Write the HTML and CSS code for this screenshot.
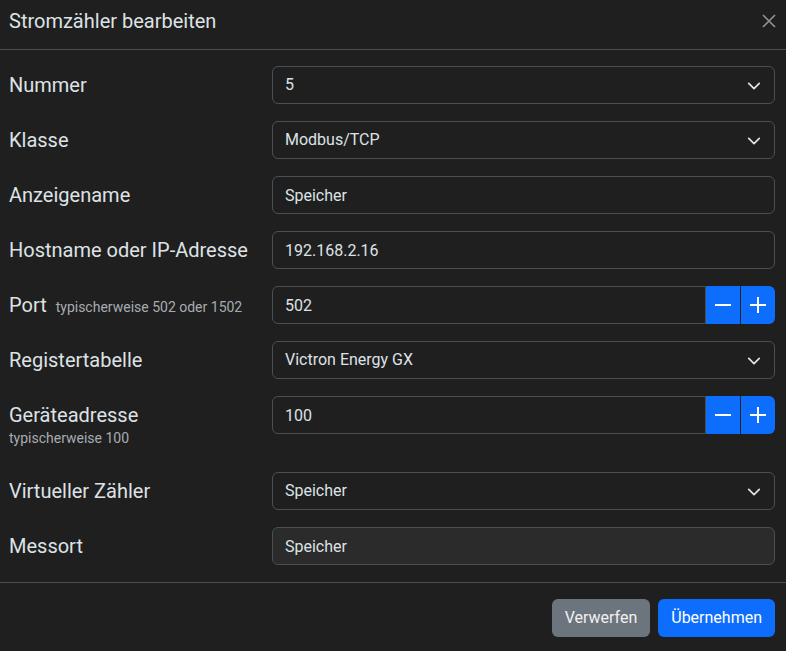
FILE: index.html
```html
<!DOCTYPE html>
<html lang="de">
  <head>
    <meta charset="UTF-8" />
    <meta name="viewport" content="width=device-width, initial-scale=1.0" />
    <title>Stromzähler bearbeiten</title>
    <link rel="stylesheet" href="styles.css">
  </head>
  <body>
    <div class="modal">
      <div class="modal-header">
        <h5 class="modal-title">Stromzähler bearbeiten</h5>
        <button class="btn-close" aria-label="Schließen">
          <svg width="14" height="14" viewBox="0 0 14 14"><path d="M1 1L13 13M13 1L1 13" stroke="currentColor" stroke-width="1.6" /></svg>
        </button>
      </div>

      <form class="modal-body">
        <div class="form-row">
          <label class="form-label">Nummer</label>
          <div class="field select-wrap">
            <select class="form-control"><option>5</option></select>
            <svg class="chevron" viewBox="0 0 16 16"><path d="m2 5 6 6 6-6" /></svg>
          </div>
        </div>

        <div class="form-row">
          <label class="form-label">Klasse</label>
          <div class="field select-wrap">
            <select class="form-control"><option>Modbus/TCP</option></select>
            <svg class="chevron" viewBox="0 0 16 16"><path d="m2 5 6 6 6-6" /></svg>
          </div>
        </div>

        <div class="form-row">
          <label class="form-label">Anzeigename</label>
          <div class="field">
            <input class="form-control" value="Speicher" />
          </div>
        </div>

        <div class="form-row">
          <label class="form-label">Hostname oder IP-Adresse</label>
          <div class="field">
            <input class="form-control" value="192.168.2.16" />
          </div>
        </div>

        <div class="form-row">
          <label class="form-label">Port <small class="help-inline">typischerweise 502 oder 1502</small></label>
          <div class="field input-group">
            <input class="form-control" value="502" />
            <button type="button" class="btn-step"><svg viewBox="0 0 16 16"><path d="M0 8H16" /></svg></button>
            <button type="button" class="btn-step last"><svg viewBox="0 0 16 16"><path d="M0 8H16M8 0V16" /></svg></button>
          </div>
        </div>

        <div class="form-row">
          <label class="form-label">Registertabelle</label>
          <div class="field select-wrap">
            <select class="form-control"><option>Victron Energy GX</option></select>
            <svg class="chevron" viewBox="0 0 16 16"><path d="m2 5 6 6 6-6" /></svg>
          </div>
        </div>

        <div class="form-row">
          <label class="form-label with-help">Geräteadresse
            <small class="help-block">typischerweise 100</small>
          </label>
          <div class="field input-group">
            <input class="form-control" value="100" />
            <button type="button" class="btn-step"><svg viewBox="0 0 16 16"><path d="M0 8H16" /></svg></button>
            <button type="button" class="btn-step last"><svg viewBox="0 0 16 16"><path d="M0 8H16M8 0V16" /></svg></button>
          </div>
        </div>

        <div class="form-row">
          <label class="form-label">Virtueller Zähler</label>
          <div class="field select-wrap">
            <select class="form-control"><option>Speicher</option></select>
            <svg class="chevron" viewBox="0 0 16 16"><path d="m2 5 6 6 6-6" /></svg>
          </div>
        </div>

        <div class="form-row">
          <label class="form-label">Messort</label>
          <div class="field">
            <input class="form-control" value="Speicher" disabled />
          </div>
        </div>
      </form>

      <div class="modal-footer">
        <button type="button" class="btn btn-secondary">Verwerfen</button>
        <button type="button" class="btn btn-primary">Übernehmen</button>
      </div>
    </div>
  </body>
</html>
```

FILE: styles.css
```css
body {
  margin: 0;
  background: #1f1f1f;
  color: #dee2e6;
  font-family: Roboto, "Liberation Sans", sans-serif;
}
.modal {
  display: flex;
  flex-direction: column;
  height: 651px;
  overflow: hidden;
}
.modal-header {
  display: flex;
  align-items: flex-start;
  justify-content: space-between;
  padding: 6px 10px 13px 9px;
  border-bottom: 1px solid #4b4f53;
}
.modal-title {
  margin: 0;
  font-size: 20px;
  font-weight: 400;
  line-height: 30px;
}
.btn-close {
  background: none;
  border: 0;
  padding: 0;
  margin-top: 8px;
  color: #939393;
  cursor: pointer;
}
.btn-close svg {
  display: block;
}
.modal-body {
  padding: 16px 11px 0 9px;
}
.form-row {
  display: grid;
  grid-template-columns: 239px 1fr;
  column-gap: 24px;
  margin-bottom: 17px;
}
.form-label {
  padding: 4px 0;
  font-size: 20px;
  line-height: 30px;
}
.form-label.with-help {
  padding-bottom: 6px;
}
.help-inline {
  margin-left: 4px;
  font-size: 14px;
  line-height: 1;
  color: #a7acb1;
}
.help-block {
  display: block;
  margin-top: -2px;
  font-size: 14px;
  line-height: 21px;
  color: #a7acb1;
}
.field {
  align-self: start;
}
.form-control {
  display: block;
  box-sizing: border-box;
  width: 100%;
  height: 38px;
  margin: 0;
  padding: 6px 12px;
  font-family: inherit;
  font-size: 16px;
  line-height: 24px;
  color: #dee2e6;
  background: #1f1f1f;
  border: 1px solid #4b4f53;
  border-radius: 6px;
  outline: none;
}
.form-control:disabled {
  background: #2b2b2b;
}
select.form-control {
  appearance: none;
  -webkit-appearance: none;
  padding-right: 36px;
}
.select-wrap {
  position: relative;
}
.chevron {
  position: absolute;
  top: 13px;
  right: 14px;
  width: 14px;
  height: 14px;
  fill: none;
  stroke: #dee2e6;
  stroke-width: 2;
  stroke-linecap: round;
  stroke-linejoin: round;
  pointer-events: none;
}
.input-group {
  display: flex;
}
.input-group .form-control {
  flex: 1;
  border-top-right-radius: 0;
  border-bottom-right-radius: 0;
}
.btn-step {
  width: 34px;
  height: 38px;
  padding: 0;
  border: 0;
  background: #0d6efd;
  color: #fff;
  display: flex;
  align-items: center;
  justify-content: center;
  cursor: pointer;
}
.btn-step + .btn-step {
  margin-left: 1px;
}
.btn-step.last {
  border-radius: 0 6px 6px 0;
}
.btn-step svg {
  width: 16px;
  height: 16px;
  stroke: #fff;
  stroke-width: 2;
}
.modal-footer {
  display: flex;
  justify-content: flex-end;
  gap: 8px;
  padding: 16px 11px 0;
  border-top: 1px solid #4b4f53;
}
.btn {
  height: 38px;
  padding: 6px 12px;
  font-family: inherit;
  font-size: 16px;
  line-height: 24px;
  color: #fff;
  border: 1px solid transparent;
  border-radius: 6px;
  cursor: pointer;
}
.btn-secondary {
  background: #6c757d;
  color: #f1f1f1;
}
.btn-primary {
  background: #0d6efd;
}
```
